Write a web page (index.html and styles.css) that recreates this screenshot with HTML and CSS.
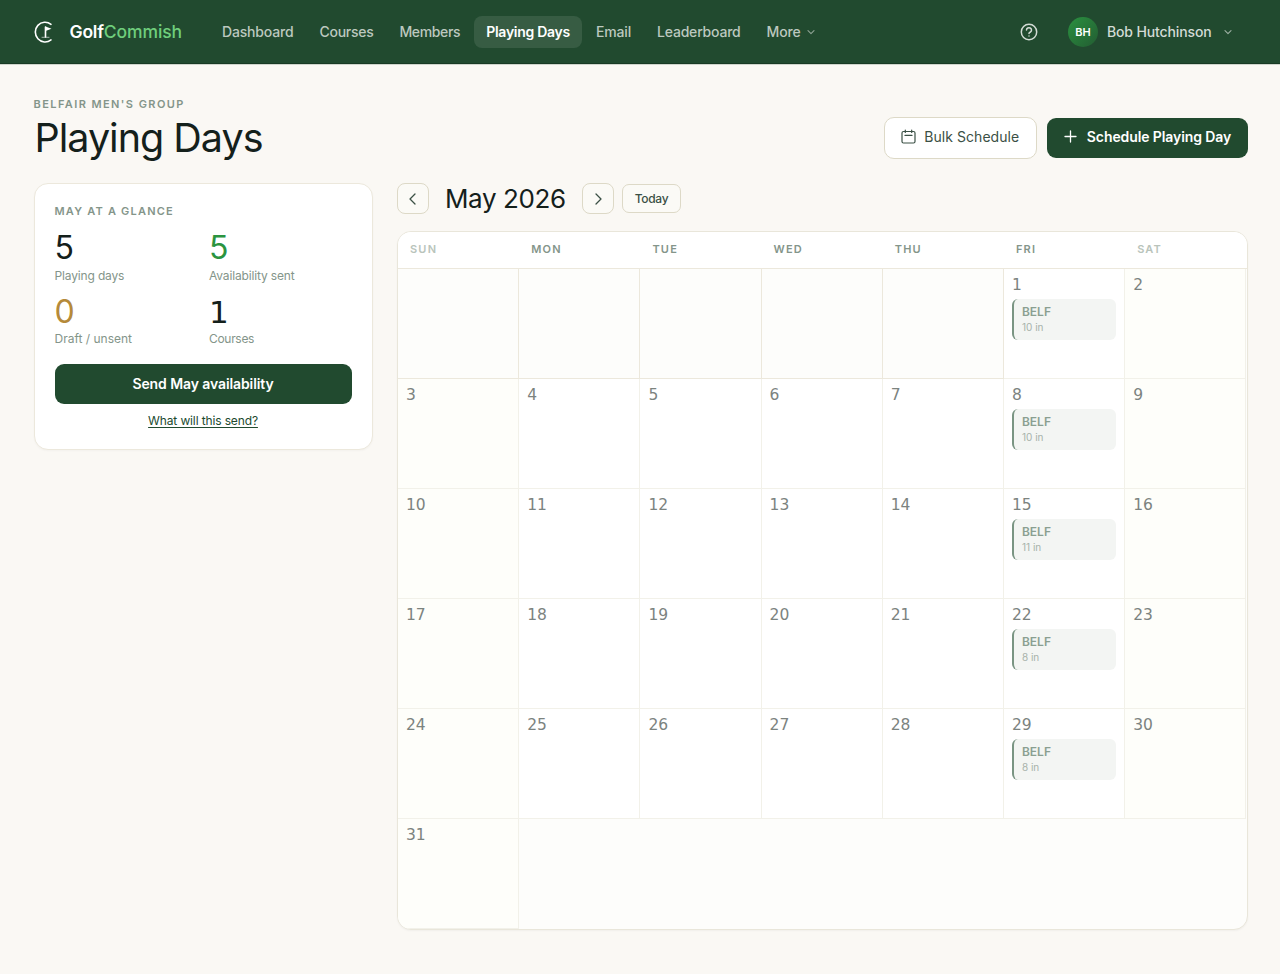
FILE: index.html
```html
<!DOCTYPE html>
<html lang="en">
<head>
<meta charset="utf-8">
<title>Playing Days</title>
<link rel="stylesheet" href="styles.css">
</head>
<body>
<header class="topbar">
  <a class="brand">
    <svg class="brand-mark" width="20" height="24" viewBox="0 0 20 24" fill="none" stroke="#fff" stroke-width="1.600" stroke-linecap="round"><path d="M17 4.300A9.700 9.900 0 1 0 17 19.900"/><path d="M11.500 17V7"/><path d="M11.500 6.600l6 2.200-6 2.200z" fill="#fff" stroke="none"/><path d="M8 17.300h7" stroke-width="1" opacity=".6"/></svg>
    <span class="brand-name">Golf<span class="brand-accent">Commish</span></span>
  </a>
  <nav class="nav">
    <a class="nav-item n1">Dashboard</a><a class="nav-item n2">Courses</a><a class="nav-item n3">Members</a><a class="nav-item active n4">Playing Days</a><a class="nav-item n5">Email</a><a class="nav-item n6">Leaderboard</a><a class="nav-item more n7">More <svg width="8" height="8" viewBox="0 0 8 8" fill="none" stroke="currentColor" stroke-width="1.100" stroke-linecap="round" stroke-linejoin="round"><path d="M1 2.700l3 3 3-3"/></svg></a>
  </nav>
  <div class="account">
    <svg class="help" width="18" height="18" viewBox="0 0 18 18" fill="none" stroke="currentColor" stroke-width="1.500" stroke-linecap="round" stroke-linejoin="round"><circle cx="9" cy="9" r="7.700"/><path d="M6.500 7a2.500 2.350 0 1 1 3.900 2c-.9.500-1.400.8-1.400 1.600"/><path d="M9 13v.1"/></svg>
    <span class="avatar">BH</span>
    <span class="user-name">Bob Hutchinson</span>
    <svg class="caret" width="8" height="8" viewBox="0 0 8 8" fill="none" stroke="currentColor" stroke-width="1.100" stroke-linecap="round" stroke-linejoin="round"><path d="M1 2.700l3 3 3-3"/></svg>
  </div>
</header>
<main class="page">
  <div class="page-head">
    <div>
      <div class="eyebrow group-name">BELFAIR MEN'S GROUP</div>
      <h1>Playing Days</h1>
    </div>
    <div class="actions">
      <button class="btn-outline"><svg width="15" height="15" viewBox="0 0 15 15" fill="none" stroke="currentColor" stroke-width="1.200" stroke-linecap="round" stroke-linejoin="round"><rect x="1" y="2.500" width="13" height="11.500" rx="1.500"/><path d="M4.300 1v2.500M10.700 1v2.500M4 6.400h7"/></svg><span>Bulk Schedule</span></button>
      <button class="btn-primary"><svg width="13" height="13" viewBox="0 0 13 13" fill="none" stroke="currentColor" stroke-width="1.300" stroke-linecap="round"><path d="M6.500 1v11M1 6.500h11"/></svg><span>Schedule Playing Day</span></button>
    </div>
  </div>
  <div class="columns">
    <aside class="glance">
      <div class="eyebrow glance-title">MAY AT A GLANCE</div>
      <div class="stats">
        <div><div class="num">5</div><div class="label l1">Playing days</div></div>
        <div><div class="num green">5</div><div class="label l2">Availability sent</div></div>
        <div><div class="num gold">0</div><div class="label l3">Draft / unsent</div></div>
        <div><div class="num one">1</div><div class="label l4">Courses</div></div>
      </div>
      <button class="btn-primary send"><span>Send May availability</span></button>
      <a class="explain">What will this send?</a>
    </aside>
    <section class="calendar-wrap">
      <div class="month-bar">
        <button class="step"><svg width="14" height="14" viewBox="0 0 14 14" fill="none" stroke="currentColor" stroke-width="1.300" stroke-linecap="round" stroke-linejoin="round"><path d="M9 2L4 7l5 5"/></svg></button>
        <h2>May 2026</h2>
        <button class="step"><svg width="14" height="14" viewBox="0 0 14 14" fill="none" stroke="currentColor" stroke-width="1.300" stroke-linecap="round" stroke-linejoin="round"><path d="M5 2l5 5-5 5"/></svg></button>
        <button class="today">Today</button>
      </div>
      <div class="calendar">
        <div class="weekdays"><span class="soft">SUN</span><span>MON</span><span>TUE</span><span>WED</span><span>THU</span><span>FRI</span><span class="soft">SAT</span></div>
        <div class="days">
          <div class="day blank"></div><div class="day blank"></div><div class="day blank"></div><div class="day blank"></div><div class="day blank"></div><div class="day">1<div class="event"><b>BELF</b><small>10 in</small></div></div><div class="day weekend">2</div>
          <div class="day weekend">3</div><div class="day">4</div><div class="day">5</div><div class="day">6</div><div class="day">7</div><div class="day">8<div class="event"><b>BELF</b><small>10 in</small></div></div><div class="day weekend">9</div>
          <div class="day weekend">10</div><div class="day">11</div><div class="day">12</div><div class="day">13</div><div class="day">14</div><div class="day">15<div class="event"><b>BELF</b><small>11 in</small></div></div><div class="day weekend">16</div>
          <div class="day weekend">17</div><div class="day">18</div><div class="day">19</div><div class="day">20</div><div class="day">21</div><div class="day">22<div class="event"><b>BELF</b><small>8 in</small></div></div><div class="day weekend">23</div>
          <div class="day weekend">24</div><div class="day">25</div><div class="day">26</div><div class="day">27</div><div class="day">28</div><div class="day">29<div class="event"><b>BELF</b><small>8 in</small></div></div><div class="day weekend">30</div>
          <div class="day weekend">31</div>
        </div>
      </div>
    </section>
  </div>
</main>
</body>
</html>
```
FILE: styles.css
```css
* { box-sizing: border-box; }
body { margin: 0; min-height: 974px; background: #faf8f4; color: #14201b; font-family: Inter, "Liberation Sans", sans-serif; }
button { font-family: inherit; margin: 0; padding: 0; }
svg { display: block; flex: none; }
.topbar { height: 64px; padding: 0 48px 0 34px; display: flex; align-items: center; background: #214a2f; border-bottom: 1px solid #183a24; box-shadow: 0 1px 0 rgba(33,74,47,.2); white-space: nowrap; }
.brand { display: flex; align-items: center; width: 176px; gap: 15.500px; }
.brand-name { font-size: 17.500px; font-weight: 600; color: #fff; letter-spacing: -.2px; }
.brand-accent { color: #6fce7c; font-weight: 500; letter-spacing: -.1px; }
.nav { display: flex; gap: 2px; margin-top: 1px; }
.nav-item { height: 32px; line-height: 31px; padding: 0 12px; border-radius: 8px; font-size: 14px; font-weight: 500; color: #bcc8bf; letter-spacing: -.17px; }
.nav-item.active { background: #375c43; color: #fff; font-weight: 600; letter-spacing: -.28px; }
.nav .n2 { letter-spacing: -.28px; }
.nav .n3 { letter-spacing: -.35px; }
.nav .n6 { letter-spacing: -.2px; }
.more { display: flex; align-items: center; gap: 6.500px; padding-bottom: 1px; }
.more svg, .caret { opacity: .7; }
.account { margin-left: auto; display: flex; align-items: center; color: #d3dbd5; }
.help { margin-right: 30px; }
.avatar { width: 30px; height: 30px; line-height: 30px; border-radius: 50%; background: linear-gradient(135deg, #2a9140, #235c32); color: #fff; font-size: 11px; font-weight: 600; text-align: center; margin-right: 9px; }
.user-name { font-size: 14px; font-weight: 500; letter-spacing: -.13px; }
.caret { margin-left: 12.500px; }
.page { padding: 32px 32px 0 33.500px; }
.page-head { display: flex; justify-content: space-between; height: 87px; }
.eyebrow { font-size: 11px; line-height: 16px; font-weight: 600; color: #84958a; letter-spacing: 1.300px; white-space: nowrap; }
.group-name { letter-spacing: 1.420px; }
.glance-title { margin-top: -1px; letter-spacing: 1.200px; }
h1 { margin: 2px 0 0 1px; font-size: 39.500px; line-height: 48px; font-weight: 440; letter-spacing: -1px; white-space: nowrap; }
.actions { display: flex; align-items: center; gap: 10px; height: 42px; margin-top: 20.500px; white-space: nowrap; }
.btn-outline { width: 153.500px; height: 42px; display: flex; align-items: center; justify-content: center; gap: 8px; background: #fff; border: 1px solid #ddd9c7; border-radius: 10px; color: #3b5045; font-size: 14px; letter-spacing: .05px; padding-bottom: 3px; }
.btn-primary { width: 201px; height: 40px; display: flex; align-items: center; justify-content: center; gap: 10px; background: #214a2f; border: 0; border-radius: 9px; color: #fff; font-size: 14px; font-weight: 600; letter-spacing: -.1px; padding-bottom: 2px; }
.columns { display: grid; grid-template-columns: 339px 1fr; gap: 24.500px; align-items: start; }
.glance { height: 267px; border: 1px solid #ece8dc; border-radius: 14px; background: #fff; padding: 20px 20px 0; box-shadow: 0 1px 2px rgba(20,32,27,.03); }
.stats { display: grid; grid-template-columns: 1fr 1fr; column-gap: 12px; margin-top: 11px; grid-auto-rows: 64px; }
.num { font-size: 32px; line-height: 36px; letter-spacing: -.5px; }
.one { font-family: "DejaVu Sans", sans-serif; font-size: 31px; }
.green { color: #2b9440; }
.gold { color: #b58a3a; }
.label { font-size: 12px; line-height: 18px; color: #84958a; white-space: nowrap; }
.l1, .l2 { padding-top: 1px; letter-spacing: -.15px; }
.l4 { letter-spacing: -.3px; }
.send { width: 100%; margin-top: 6px; }
.explain { display: block; margin-top: 9px; text-align: center; font-size: 12px; line-height: 16px; letter-spacing: -.13px; color: #214a2f; text-decoration: underline; text-underline-offset: 2px; }
.month-bar { display: flex; align-items: center; height: 31px; }
.step { width: 32px; height: 31px; display: flex; align-items: center; justify-content: center; border: 1px solid #ddd9c7; border-radius: 8px; background: #fbfaf6; color: #3b5045; }
h2 { width: 121px; margin: 0 16px; font-size: 26px; line-height: 31px; font-weight: 440; letter-spacing: -.4px; white-space: nowrap; }
.today { width: 59px; height: 29px; margin-left: 8px; border: 1px solid #ddd9c7; border-radius: 7px; background: #fbfaf6; color: #3b5045; font-size: 12px; font-weight: 500; letter-spacing: -.3px; }
.calendar { margin-top: 17px; height: 699px; border: 1px solid #e9e6da; border-radius: 14px; background: #fdfdfb; overflow: hidden; box-shadow: 0 1px 2px rgba(20,32,27,.04); }
.weekdays { display: grid; grid-template-columns: repeat(7, 121.200px); height: 37.400px; background: #fff; border-bottom: 1px solid #ece8dc; }
.weekdays span { padding: 0 12px; font-size: 11px; line-height: 34px; font-weight: 600; letter-spacing: 1.200px; color: #84958a; }
.weekdays .soft { color: #b9c4bb; }
.days { display: grid; grid-template-columns: repeat(7, 121.200px); grid-auto-rows: 109.880px; }
.day { background: #fff; border-right: 1px solid #f2f1e9; border-bottom: 1px solid #f2f1e9; padding: 5px 8px 0; font-family: "DejaVu Sans", sans-serif; font-size: 15.500px; line-height: 22px; color: #7c837f; }
.weekend { background: #fefefa; }
.blank { background: #fdfdfb; border-color: #ece8dc; }
.event { height: 41px; margin-top: 3px; padding: 5px 8px; border-left: 2px solid #7a9583; border-radius: 6px; background: #f3f5f3; font-family: Inter, sans-serif; }
.event b { display: block; font-size: 12px; line-height: 16px; font-weight: 600; color: #8a9f91; }
.event small { display: block; font-size: 10px; line-height: 14px; color: #a7b2aa; }
```
